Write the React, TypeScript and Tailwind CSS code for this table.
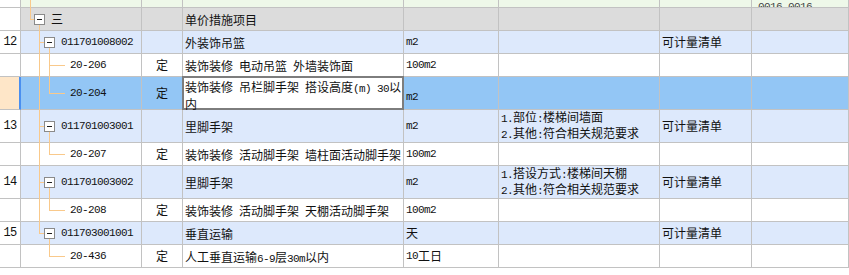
import React from "react";

type Tree = "top" | "root" | "group" | "groupLast" | "child" | "childLast" | "childLastEnd";
type Row = {
  num?: string;
  tree: Tree;
  code: string;
  ding?: string;
  name?: string;
  unit?: string;
  feat?: string[];
  kind?: string;
  bg: "gray" | "blue" | "white" | "sel";
  tall?: boolean;
};

const rows: Row[] = [
  { tree: "root", code: "三", name: "单价措施项目", bg: "gray" },
  { num: "12", tree: "group", code: "011701008002", name: "外装饰吊篮", unit: "m2", kind: "可计量清单", bg: "blue" },
  { tree: "child", code: "20-206", ding: "定", name: "装饰装修 电动吊篮 外墙装饰面", unit: "100m2", bg: "white" },
  { tree: "childLast", code: "20-204", ding: "定", name: "", unit: "m2", bg: "sel", tall: true },
  {
    num: "13",
    tree: "group",
    code: "011701003001",
    name: "里脚手架",
    unit: "m2",
    feat: ["1.部位:楼梯间墙面", "2.其他:符合相关规范要求"],
    kind: "可计量清单",
    bg: "blue",
    tall: true,
  },
  { tree: "childLast", code: "20-207", ding: "定", name: "装饰装修 活动脚手架 墙柱面活动脚手架", unit: "100m2", bg: "white" },
  {
    num: "14",
    tree: "group",
    code: "011701003002",
    name: "里脚手架",
    unit: "m2",
    feat: ["1.搭设方式:楼梯间天棚", "2.其他:符合相关规范要求"],
    kind: "可计量清单",
    bg: "blue",
    tall: true,
  },
  { tree: "childLast", code: "20-208", ding: "定", name: "装饰装修 活动脚手架 天棚活动脚手架", unit: "100m2", bg: "white" },
  { num: "15", tree: "groupLast", code: "011703001001", name: "垂直运输", unit: "天", kind: "可计量清单", bg: "blue" },
  { tree: "childLastEnd", code: "20-436", ding: "定", name: "人工垂直运输6-9层30m以内", unit: "10工日", bg: "white" },
];

const CJK = "font-['Noto_Sans_CJK_SC',sans-serif] text-[12px]";
const MONO = "font-['Liberation_Mono',monospace] text-[11px] tracking-[-0.6px]";

function T({ s }: { s: string }) {
  const parts = s.match(/[\x00-\x7f]+|[^\x00-\x7f]+/g) || [];
  return (
    <>
      {parts.map((p, i) =>
        /^[\x00-\x7f]+$/.test(p) ? (
          <span key={i} className={`${MONO} whitespace-pre`}>
            {p}
          </span>
        ) : (
          <span key={i} className={CJK}>
            {p}
          </span>
        )
      )}
    </>
  );
}

const ORANGE = "bg-[#f9c98b]";

function VFull({ x }: { x: "l9" | "l18" | "l28" }) {
  const cls = x === "l9" ? "left-[9px]" : x === "l18" ? "left-[18px]" : "left-[28px]";
  return <div className={`absolute ${cls} top-0 bottom-[-1px] w-px ${ORANGE}`} />;
}

function Box({ left }: { left: "a" | "b" }) {
  return (
    <div
      className={`absolute ${left === "a" ? "left-[13px]" : "left-[23px]"} top-[calc(50%-5px)] w-[11px] h-[11px] border border-[#8a8a8a] bg-white flex items-center justify-center`}
    >
      <div className="w-[5px] h-px bg-[#1e1e1e]" />
    </div>
  );
}

function TreeLines({ t }: { t: Tree }) {
  if (t === "top") return <VFull x="l9" />;
  if (t === "root")
    return (
      <>
        <div className={`absolute left-[9px] top-0 h-1/2 w-px ${ORANGE}`} />
        <div className={`absolute left-[9px] top-1/2 w-[4px] h-px ${ORANGE}`} />
        <Box left="a" />
        <div className={`absolute left-[18px] top-[calc(50%+6px)] bottom-[-1px] w-px ${ORANGE}`} />
      </>
    );
  if (t === "group" || t === "groupLast")
    return (
      <>
        {t === "group" ? (
          <VFull x="l18" />
        ) : (
          <div className={`absolute left-[18px] top-0 h-1/2 w-px ${ORANGE}`} />
        )}
        <div className={`absolute left-[18px] top-1/2 w-[5px] h-px ${ORANGE}`} />
        <Box left="b" />
        <div className={`absolute left-[28px] top-[calc(50%+6px)] bottom-[-1px] w-px ${ORANGE}`} />
      </>
    );
  return (
    <>
      {t !== "childLastEnd" && <VFull x="l18" />}
      {t === "child" ? (
        <VFull x="l28" />
      ) : (
        <div className={`absolute left-[28px] top-0 h-1/2 w-px ${ORANGE}`} />
      )}
      <div className={`absolute left-[28px] top-1/2 w-[16px] h-px ${ORANGE}`} />
    </>
  );
}

export default function App() {
  const bgOf = (b: Row["bg"]) =>
    b === "gray" ? "bg-[#dcdcdc]" : b === "blue" ? "bg-[#dde9fc]" : b === "sel" ? "bg-[#93c6f5]" : "bg-white";
  const cell = "border-r border-b border-[#c2c2c2] shrink-0 flex items-center whitespace-nowrap text-[#111]";

  return (
    <div className="w-[849px] h-[275px] bg-white overflow-hidden">
      {/* top partial row */}
      <div className="flex h-[8px]">
        <div className={`${cell} w-[21px] bg-white`} />
        <div className={`${cell} w-[121px] bg-[#eef8e9] relative`}>
          <TreeLines t="top" />
        </div>
        <div className={`${cell} w-[41px] bg-[#eef8e9]`} />
        <div className={`${cell} w-[221px] bg-[#eef8e9]`} />
        <div className={`${cell} w-[95px] bg-[#eef8e9]`} />
        <div className={`${cell} w-[161px] bg-[#eef8e9]`} />
        <div className={`${cell} w-[92px] bg-[#eef8e9]`} />
        <div className={`${cell} flex-1 bg-[#eef8e9] items-end overflow-hidden`}>
          <span className={`${MONO} ml-[6px] leading-[11px] mb-[-6px] text-[#444]`}>0016_0016...</span>
        </div>
      </div>

      {rows.map((r, i) => {
        const h = r.tall ? "h-[33px]" : "h-[23px]";
        const bg = bgOf(r.bg);
        const isGroup = r.tree === "root" || r.tree === "group" || r.tree === "groupLast";
        return (
          <div key={i} className={`flex ${h}`}>
            <div
              className={`${cell} w-[21px] justify-center ${
                r.bg === "sel" ? "bg-[#fee6c8] border-r-2 border-r-[#4a8ff0]" : "bg-white"
              }`}
            >
              {r.num && <span className={`${MONO} text-[12px] tracking-[-0.8px]`}>{r.num}</span>}
            </div>
            <div className={`${cell} w-[121px] ${bg} relative`}>
              <TreeLines t={r.tree} />
              {r.tree === "root" ? (
                <span className={`${CJK} ml-[30px]`}>{r.code}</span>
              ) : isGroup ? (
                <span className={`${MONO} ml-[40px]`}>{r.code}</span>
              ) : (
                <span className={`${MONO} ml-[49px]`}>{r.code}</span>
              )}
            </div>
            <div className={`${cell} w-[41px] ${bg} justify-center`}>
              {r.ding && <span className={CJK}>{r.ding}</span>}
            </div>
            <div className={`${cell} w-[221px] ${bg} relative`}>
              {r.bg === "sel" ? (
                <div className="absolute inset-[-1px] border-2 border-[#7d7d7d] bg-white pl-[1px] pt-[1px] flex flex-col leading-[14px]">
                  <div className="whitespace-nowrap">
                    <T s="装饰装修 吊栏脚手架 搭设高度(m) 30以" />
                  </div>
                  <div>
                    <T s="内" />
                  </div>
                </div>
              ) : (
                r.name && (
                  <span className="pl-[2px] overflow-hidden">
                    <T s={r.name} />
                  </span>
                )
              )}
            </div>
            <div className={`${cell} w-[95px] ${bg} pl-[2px] ${r.bg === "sel" ? "items-end pb-[4px]" : ""}`}>
              {r.unit && <T s={r.unit} />}
            </div>
            <div className={`${cell} w-[161px] ${bg} pl-[2px]`}>
              {r.feat && (
                <div className="flex flex-col leading-[13px]">
                  {r.feat.map((f, k) => (
                    <div key={k}>
                      <T s={f} />
                    </div>
                  ))}
                </div>
              )}
            </div>
            <div className={`${cell} w-[92px] ${bg} pl-[2px]`}>
              {r.kind && <span className={CJK}>{r.kind}</span>}
            </div>
            <div className={`${cell} flex-1 ${bg}`} />
          </div>
        );
      })}
    </div>
  );
}
